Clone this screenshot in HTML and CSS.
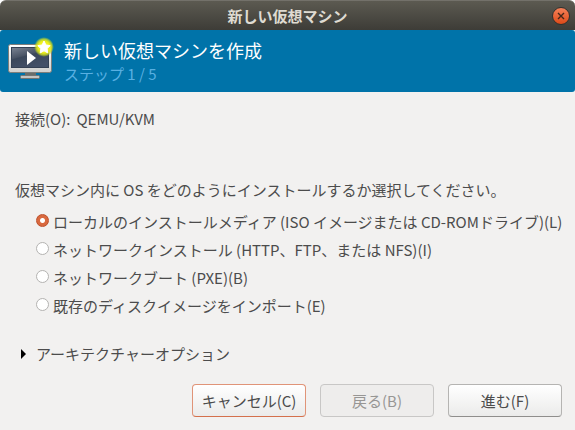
FILE: index.html
```html
<!DOCTYPE html>
<html lang="ja">
<head>
    <meta charset="UTF-8">
    <meta name="viewport" content="width=device-width, initial-scale=1.0">
    <title>新しい仮想マシン</title>
    <link rel="stylesheet" href="styles.css">
</head>
<body>
    <div class="window">
        <header class="titlebar">
            <h1 class="titlebar-text">新しい仮想マシン</h1>
            <button type="button" class="close" aria-label="閉じる">
                <svg width="8" height="8" viewBox="0 0 8 8">
                    <path d="M1 1l6 6M7 1l-6 6" stroke="#43261a" stroke-width="1.4" fill="none"/>
                </svg>
            </button>
        </header>
        <div class="banner">
            <svg class="banner-icon" width="48" height="48" viewBox="0 0 48 48">
                <defs>
                    <linearGradient id="screen" x1="0" y1="0" x2="0.5" y2="1">
                        <stop offset="0" stop-color="#7b8493"/>
                        <stop offset="0.45" stop-color="#4a5465"/>
                        <stop offset="0.5" stop-color="#3b475a"/>
                        <stop offset="1" stop-color="#435068"/>
                    </linearGradient>
                    <linearGradient id="frame" x1="0" y1="0" x2="0" y2="1">
                        <stop offset="0" stop-color="#ffffff"/>
                        <stop offset="1" stop-color="#d0d0ce"/>
                    </linearGradient>
                    <radialGradient id="glow">
                        <stop offset="0" stop-color="#fff84a"/>
                        <stop offset="0.6" stop-color="#eaee18"/>
                        <stop offset="0.8" stop-color="#d2e020" stop-opacity="0.75"/>
                        <stop offset="1" stop-color="#a8cc30" stop-opacity="0"/>
                    </radialGradient>
                </defs>
                <path d="M17 35h11v4H17z" fill="#6b6d6a"/>
                <rect x="12.5" y="38.5" width="19" height="3" rx="1" fill="#c4c4c2" stroke="#747673"/>
                <rect x="0.5" y="7.5" width="43" height="28" rx="2" fill="url(#frame)" stroke="#7c7e7b"/>
                <rect x="3.5" y="10.5" width="37" height="20" fill="url(#screen)" stroke="#354154"/>
                <path d="M19 14v14l9-7z" fill="#fff"/>
                <circle cx="36" cy="10" r="10" fill="url(#glow)"/>
                <path d="M36 4l1.9 4 4.3.6-3.1 3 .7 4.3-3.8-2.1-3.8 2.1.7-4.3-3.1-3 4.3-.6z" fill="#fff" stroke="#fff" stroke-linejoin="round"/>
            </svg>
            <div class="banner-text">
                <h2>新しい仮想マシンを作成</h2>
                <p>ステップ 1 / 5</p>
            </div>
        </div>
        <form class="content">
            <div class="connection">
                <span>接続(O):</span>
                <span>QEMU/KVM</span>
            </div>
            <fieldset class="methods">
                <legend>仮想マシン内に OS をどのようにインストールするか選択してください。</legend>
                <label class="method"><input type="radio" name="method" checked>ローカルのインストールメディア (ISO イメージまたは CD-ROMドライブ)(L)</label>
                <label class="method"><input type="radio" name="method">ネットワークインストール (HTTP、FTP、または NFS)(I)</label>
                <label class="method"><input type="radio" name="method">ネットワークブート (PXE)(B)</label>
                <label class="method"><input type="radio" name="method">既存のディスクイメージをインポート(E)</label>
            </fieldset>
            <details class="options">
                <summary>
                    <svg class="arrow" width="6" height="10" viewBox="0 0 6 10"><path d="M0 0v10l5-5z" fill="#000"/></svg>
                    アーキテクチャーオプション
                </summary>
            </details>
            <div class="buttons">
                <button type="button" class="btn btn-cancel">キャンセル(C)</button>
                <button type="button" class="btn" disabled>戻る(B)</button>
                <button type="button" class="btn">進む(F)</button>
            </div>
        </form>
    </div>
</body>
</html>
```
FILE: styles.css
```css
body {
    margin: 0;
    background: #fff;
    color: #4c4c4c;
    font-family: "Noto Sans CJK JP", sans-serif;
    font-size: 15px;
    line-height: 22px;
}
.window {
    min-height: 100vh;
    display: flex;
    flex-direction: column;
    background: #f2f1f0;
    border-radius: 6px 6px 0 0;
}
.titlebar {
    display: grid;
    grid-template-columns: 1fr auto 1fr;
    align-items: center;
    height: 30px;
    padding: 0 5px;
    box-sizing: border-box;
    background: linear-gradient(#5c5a51, #3d3c37);
    border-top: 1px solid #73716a;
    border-radius: 6px 6px 0 0;
}
.titlebar-text {
    grid-column: 2;
    margin: 0;
    color: #dfdbd2;
    font-size: 15px;
    font-weight: bold;
    line-height: 22px;
}
.close {
    justify-self: end;
    display: flex;
    align-items: center;
    justify-content: center;
    width: 18px;
    height: 18px;
    padding: 0;
    border: 1px solid #33312d;
    border-radius: 50%;
    background: linear-gradient(#f58159, #dd4a18);
}
.banner {
    display: flex;
    gap: 8px;
    padding: 7px 8px;
    background: #0073a9;
    border-radius: 3px;
}
.banner-text h2 {
    margin: 0;
    color: #fff;
    font-size: 18px;
    font-weight: normal;
    line-height: 26px;
}
.banner-text p {
    margin: 0;
    color: #59b0e2;
}
.content {
    flex: 1;
    display: flex;
    flex-direction: column;
    padding: 16px 13px 13px 15px;
}
.connection {
    display: flex;
    gap: 6px;
}
.methods {
    display: flex;
    flex-direction: column;
    align-items: flex-start;
    gap: 6px;
    margin: 49px 0 0;
    padding: 0 0 0 21px;
    border: none;
    white-space: nowrap;
}
.methods legend {
    margin: 0 0 10px -21px;
    padding: 0;
}
.method {
    display: flex;
    gap: 4px;
}
.method input {
    appearance: none;
    width: 13px;
    height: 13px;
    margin: 3px 0 0;
    box-sizing: border-box;
    border: 1px solid #b4b3b1;
    border-radius: 50%;
    background: #fff;
}
.method input:checked {
    border-color: #bd4f2a;
    background: radial-gradient(circle, #fff 2px, #d9693f 3px);
}
.options {
    margin-top: 26px;
}
.options summary {
    display: flex;
    align-items: center;
    gap: 9px;
    padding-left: 6px;
    list-style: none;
}
.buttons {
    display: flex;
    justify-content: flex-end;
    gap: 14px;
    margin-top: auto;
}
.btn {
    width: 114px;
    height: 33px;
    padding: 0;
    border: 1px solid #b5b4b2;
    border-bottom-color: #8f8e8c;
    border-radius: 4px;
    background: linear-gradient(#fff, #ebebea);
    color: #4c4c4c;
    font: inherit;
}
.btn-cancel {
    border-color: #e09478;
    border-bottom-color: #d4704c;
}
.btn:disabled {
    border-color: #c8c7c6;
    background: #eeedec;
    color: #979694;
}
```
